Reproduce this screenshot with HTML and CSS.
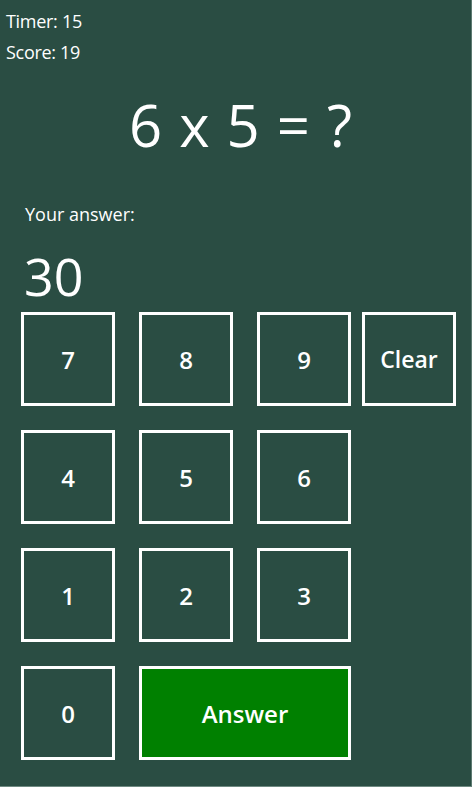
FILE: index.html
```html
<!DOCTYPE html>
<html>
<head>
<meta charset="utf-8">
<link rel="stylesheet" href="styles.css">
</head>
<body>
<div class="app">
  <div class="stats">
    <div class="stat">Timer: 15</div>
    <div class="stat">Score: 19</div>
  </div>
  <div class="question">6 x 5 = ?</div>
  <div class="label">Your answer:</div>
  <div class="answer">30</div>
  <div class="pad">
    <button class="key">7</button>
    <button class="key">8</button>
    <button class="key">9</button>
    <button class="key clear">Clear</button>
    <button class="key">4</button>
    <button class="key">5</button>
    <button class="key">6</button>
    <span></span>
    <button class="key">1</button>
    <button class="key">2</button>
    <button class="key">3</button>
    <span></span>
    <button class="key">0</button>
    <button class="key submit">Answer</button>
  </div>
</div>
</body>
</html>
```
FILE: styles.css
```css
html, body {
  margin: 0;
  padding: 0;
  background: #2a4d43;
}
.app {
  box-sizing: border-box;
  width: 472px;
  height: 787px;
  border-right: 1px solid #5d7a71;
  border-bottom: 1px solid #6f8a82;
  color: #ffffff;
  font-family: "Open Sans", "Noto Sans", sans-serif;
  overflow: hidden;
}
.stats {
  padding: 6px 0 0 6px;
}
.stat {
  font-size: 18px;
  line-height: 31px;
  letter-spacing: -0.3px;
}
.question {
  font-size: 58px;
  line-height: 80px;
  text-align: center;
  padding-left: 10px;
  margin-top: 17px;
  word-spacing: 2px;
}
.label {
  font-size: 18px;
  line-height: 28px;
  padding-left: 25px;
  margin-top: 35px;
}
.answer {
  font-size: 52px;
  line-height: 64px;
  padding-left: 24px;
  margin-top: 16px;
}
.pad {
  display: grid;
  grid-template-columns: 118px 118px 105px 94px;
  grid-auto-rows: 94px;
  column-gap: 0;
  row-gap: 24px;
  padding-left: 21px;
  margin-top: 4px;
}
.key {
  box-sizing: border-box;
  width: 94px;
  margin: 0;
  padding: 0;
  border: 3px solid #ffffff;
  background: transparent;
  color: #ffffff;
  font-family: "Open Sans", "Noto Sans", sans-serif;
  font-weight: 600;
  font-size: 24px;
}
.clear {
  font-size: 23px;
}
.submit {
  grid-column: span 2;
  width: 212px;
  background: #008000;
  font-size: 24px;
}
```
